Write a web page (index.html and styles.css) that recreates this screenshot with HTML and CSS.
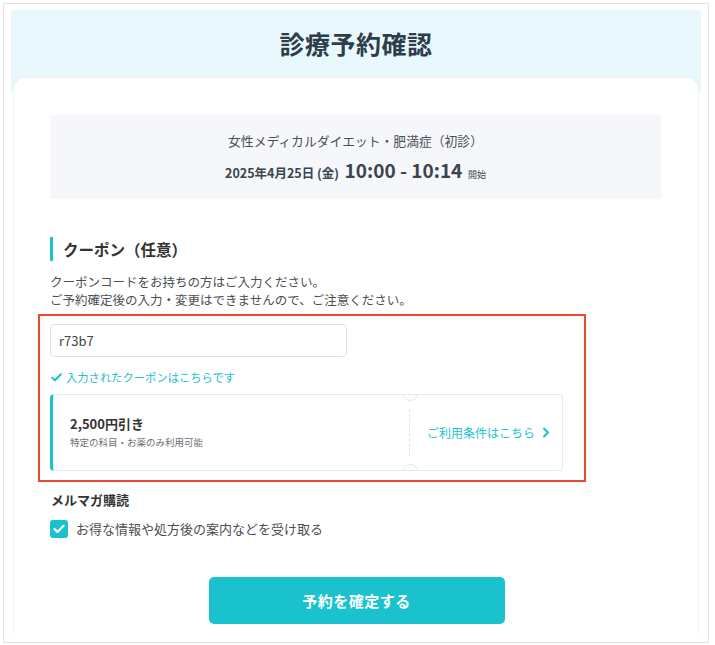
FILE: index.html
```html
<!DOCTYPE html>
<html lang="ja">
<head>
    <meta charset="UTF-8">
    <title>診療予約確認</title>
    <link rel="stylesheet" href="styles.css">
</head>
<body>
    <div class="frame">
        <div class="page">
            <h1 class="page-title">診療予約確認</h1>

            <div class="card">
                <div class="summary">
                    <p class="menu-name">女性メディカルダイエット・肥満症（初診）</p>
                    <p class="schedule">
                        <span class="date">2025年4月25日 (金)</span>
                        <span class="time">10:00 - 10:14</span>
                        <span class="start">開始</span>
                    </p>
                </div>

                <h2 class="section-title">クーポン（任意）</h2>
                <p class="note">クーポンコードをお持ちの方はご入力ください。<br>ご予約確定後の入力・変更はできませんので、ご注意ください。</p>

                <div class="highlight">
                    <input type="text" class="coupon-input" value="r73b7">
                    <p class="valid">
                        <svg width="11" height="9" viewBox="0 0 11 9"><path d="M1.2 4.6 L4 7.3 L9.8 1.3" fill="none" stroke="currentColor" stroke-width="2" stroke-linecap="round" stroke-linejoin="round"/></svg>
                        入力されたクーポンはこちらです
                    </p>
                    <div class="coupon">
                        <span class="notch notch-top"></span>
                        <span class="notch notch-bottom"></span>
                        <div class="coupon-main">
                            <p class="coupon-value">2,500円引き</p>
                            <p class="coupon-scope">特定の科目・お薬のみ利用可能</p>
                        </div>
                        <div class="coupon-side">
                            <a class="terms" href="#">ご利用条件はこちら
                                <svg width="8" height="11" viewBox="0 0 8 11"><path d="M2 1.5 L6 5.5 L2 9.5" fill="none" stroke="currentColor" stroke-width="2" stroke-linecap="round" stroke-linejoin="round"/></svg>
                            </a>
                        </div>
                    </div>
                </div>

                <h3 class="sub-title">メルマガ購読</h3>
                <label class="check">
                    <span class="check-box">
                        <svg width="12" height="10" viewBox="0 0 12 10"><path d="M1.5 5 L4.5 8 L10.5 1.8" fill="none" stroke="#fff" stroke-width="2.2" stroke-linecap="round" stroke-linejoin="round"/></svg>
                    </span>
                    お得な情報や処方後の案内などを受け取る
                </label>

                <div class="actions">
                    <button class="submit">予約を確定する</button>
                </div>
            </div>
        </div>
    </div>
</body>
</html>
```

FILE: styles.css
```css
:root {
    --teal: #19c2cc;
    --text: #333b44;
    --sub: #4a4f55;
}

* {
    box-sizing: border-box;
}

body {
    margin: 0;
    font-family: "Noto Sans CJK JP", "Noto Sans", sans-serif;
    color: var(--text);
    background: #fff;
}

p {
    margin: 0;
}

.frame {
    width: 706px;
    height: 640px;
    margin: 3px 0 0 3px;
    border: 1px solid #e2e2e2;
    padding: 6px 7px 0 7px;
    overflow: hidden;
}

.page {
    width: 690px;
    background: linear-gradient(#e9f8fd 0, #e9f8fd 80px, #fff 80px);
    padding: 0 2px;
}

.page-title {
    margin: 0;
    height: 67px;
    padding-top: 16px;
    text-align: center;
    font-size: 25px;
    font-weight: 700;
    line-height: 34px;
    color: #2e3d4b;
    letter-spacing: 0.5px;
}

.card {
    background: #fff;
    border: 1px solid #eef1f3;
    border-bottom: none;
    border-radius: 12px 12px 0 0;
    height: 557px;
    padding: 37px 37px 0 36px;
}

.summary {
    background: #f5f7fa;
    height: 84px;
    padding-top: 16px;
    text-align: center;
}

.menu-name {
    font-size: 12.8px;
    line-height: 20px;
    color: var(--sub);
}

.schedule {
    margin-top: 6px;
    line-height: 26px;
    font-weight: 700;
    color: #3a4550;
}

.date {
    font-size: 12.5px;
}

.time {
    font-size: 19px;
    margin-left: 2px;
}

.start {
    font-size: 9px;
    font-weight: 400;
    margin-left: 2px;
}

.section-title {
    margin: 38px 0 0 0;
    border-left: 3px solid var(--teal);
    padding-left: 10px;
    font-size: 15.5px;
    line-height: 24px;
    font-weight: 700;
    color: #333;
}

.note {
    margin-top: 12px;
    font-size: 12.5px;
    line-height: 18px;
    color: var(--sub);
}

.highlight {
    margin: 5px 75px 0 -12px;
    border: 2px solid #e84a30;
    padding: 8px 21px 9px 10px;
}

.coupon-input {
    display: block;
    width: 297px;
    height: 33px;
    border: 1px solid #dfe3e8;
    border-radius: 4px;
    padding: 0 8px;
    font-family: inherit;
    font-size: 13px;
    color: #444;
}

.valid {
    display: flex;
    align-items: center;
    gap: 4px;
    margin-top: 12px;
    font-size: 11.3px;
    line-height: 16px;
    color: var(--teal);
    padding-left: 1px;
}

.coupon {
    display: flex;
    margin-top: 9px;
    height: 77px;
    border: 1px solid #e6e9ec;
    border-left: 3px solid var(--teal);
    border-radius: 4px;
    position: relative;
    overflow: hidden;
}

.notch {
    position: absolute;
    left: 350px;
    width: 15px;
    height: 15px;
    border: 1px solid #e0e4e8;
    border-radius: 50%;
    background: #fff;
}

.notch-top {
    top: -9px;
}

.notch-bottom {
    bottom: -9px;
}

.coupon-main {
    width: 357px;
    padding: 5px 0 0 17px;
    border-right: 1px dashed #e3e6e9;
    margin: 14px 0;
}

.coupon-value {
    font-size: 13px;
    font-weight: 700;
    line-height: 20px;
    color: #333;
}

.coupon-scope {
    margin-top: 1px;
    font-size: 9.5px;
    line-height: 14px;
    color: #6a6f75;
}

.coupon-side {
    flex: 1;
    display: flex;
    align-items: center;
    padding-left: 17px;
}

.terms {
    display: flex;
    align-items: center;
    gap: 7px;
    font-size: 12px;
    color: var(--teal);
    text-decoration: none;
}

.sub-title {
    margin: 8px 0 0 1px;
    font-size: 13px;
    font-weight: 700;
    line-height: 20px;
    color: #333;
}

.check {
    display: flex;
    align-items: center;
    gap: 8px;
    margin-top: 9px;
    font-size: 13px;
    color: var(--sub);
}

.check-box {
    width: 18px;
    height: 18px;
    border-radius: 3px;
    background: var(--teal);
    display: flex;
    align-items: center;
    justify-content: center;
}

.actions {
    display: flex;
    justify-content: center;
    margin-top: 39px;
    padding-left: 2px;
}

.submit {
    width: 296px;
    height: 47px;
    border: none;
    border-radius: 5px;
    background: var(--teal);
    color: #fff;
    font-family: inherit;
    font-size: 15px;
    font-weight: 700;
    letter-spacing: 0.5px;
    cursor: pointer;
}
```
